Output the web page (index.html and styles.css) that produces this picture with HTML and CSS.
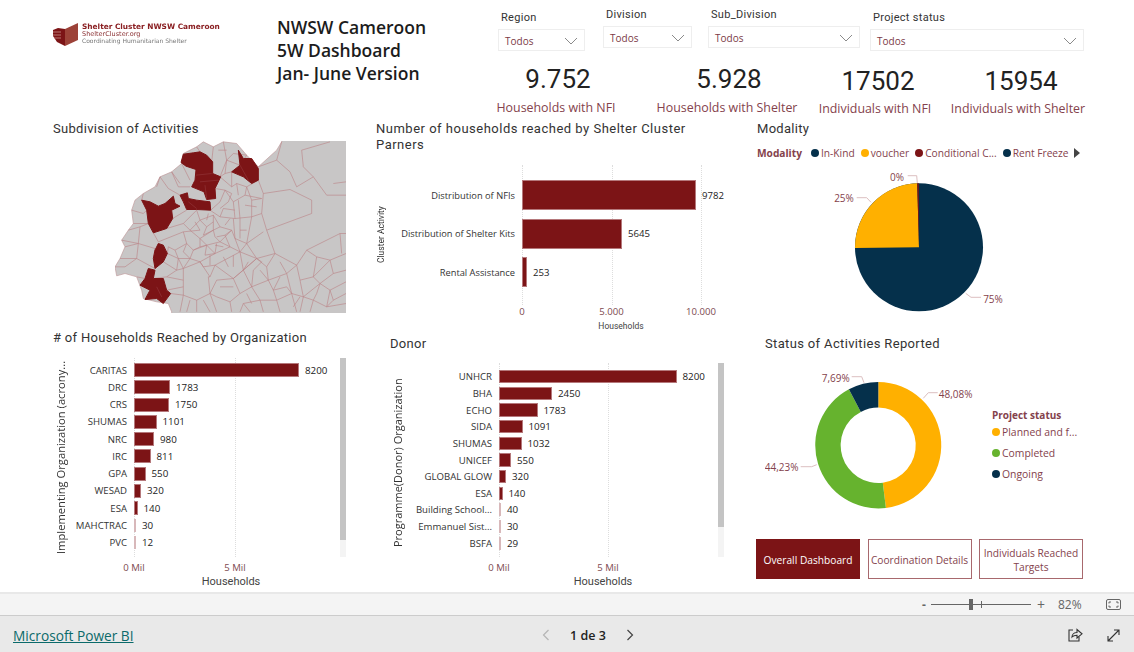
FILE: index.html
```html
<!DOCTYPE html>
<html lang="en">
<head>
  <meta charset="UTF-8">
  <title>NWSW Cameroon 5W Dashboard</title>
  <link rel="stylesheet" href="styles.css">
</head>
<body>
  <div class="report">
    <!-- header -->
    <div class="header">
      <div class="logo">
        <svg class="logo-mark" width="25" height="23" viewBox="0 0 25 23">
          <polygon points="12,6 25,0 25,17 12,23" fill="#9c4238"/>
          <polygon points="12,6 12,23 4,19 0,13 0,7 5,5" fill="#7c1416"/>
          <path d="M0 9 L8 9 M0 12 L8 12 M1 15 L8 15" stroke="#c98f8c" stroke-width="0.8"/>
        </svg>
        <div class="logo-text">
          <div class="logo-name">Shelter Cluster NWSW Cameroon</div>
          <div class="logo-site">ShelterCluster.org</div>
          <div class="logo-tag">Coordinating Humanitarian Shelter</div>
        </div>
      </div>
      <h1 class="report-title">NWSW Cameroon<br>5W Dashboard<br>Jan- June Version</h1>
      <div class="header-right">
        <div class="filters">
          <div class="filter filter-region low">
            <div class="filter-label">Region</div>
            <div class="filter-box">Todos<svg class="chev" width="14" height="8" viewBox="0 0 14 8"><path d="M1 1 L7 7 L13 1" fill="none" stroke="#8a8a8a"/></svg></div>
          </div>
          <div class="filter filter-division">
            <div class="filter-label">Division</div>
            <div class="filter-box">Todos<svg class="chev" width="14" height="8" viewBox="0 0 14 8"><path d="M1 1 L7 7 L13 1" fill="none" stroke="#8a8a8a"/></svg></div>
          </div>
          <div class="filter filter-sub">
            <div class="filter-label">Sub_Division</div>
            <div class="filter-box">Todos<svg class="chev" width="14" height="8" viewBox="0 0 14 8"><path d="M1 1 L7 7 L13 1" fill="none" stroke="#8a8a8a"/></svg></div>
          </div>
          <div class="filter filter-status low">
            <div class="filter-label">Project status</div>
            <div class="filter-box">Todos<svg class="chev" width="14" height="8" viewBox="0 0 14 8"><path d="M1 1 L7 7 L13 1" fill="none" stroke="#8a8a8a"/></svg></div>
          </div>
        </div>
        <div class="kpis">
          <div class="kpi kpi-1"><div class="kpi-value">9.752</div><div class="kpi-label">Households with NFI</div></div>
          <div class="kpi kpi-2"><div class="kpi-value">5.928</div><div class="kpi-label">Households with Shelter</div></div>
          <div class="kpi kpi-3 low"><div class="kpi-value">17502</div><div class="kpi-label">Individuals with NFI</div></div>
          <div class="kpi kpi-4 low"><div class="kpi-value">15954</div><div class="kpi-label">Individuals with Shelter</div></div>
        </div>
      </div>
    </div>

    <!-- middle row -->
    <div class="row-mid">
      <div class="panel panel-map">
        <h2 class="visual-title">Subdivision of Activities</h2>
        <svg class="map" width="231" height="172" viewBox="45 33 693 515">
          <path class="land" d="M215 570 L215 545 L205 520 L170 515 L130 505 L125 480 L110 440 L75 430 L50 437 L45 410 L60 385 L75 350 L65 330 L85 300 L100 280 L95 240 L105 210 L130 190 L165 170 L180 140 L215 125 L245 100 L250 70 L290 50 L310 35 L340 50 L370 35 L410 40 L440 75 L475 110 L530 60 L545 35 L545 20 L760 20 L760 570 Z"/>
          <g class="mesh">
            <path d="M490 190 L570 178 L635 210 L635 250 L500 300 L485 250 Z"/>
            <path d="M500 300 L525 370 L590 405 L620 360 L720 310 L738 310"/>
            <path d="M475 110 L530 90 L570 125 L590 170 L640 140 L680 195 L738 195"/>
            <path d="M545 35 L530 90 M640 140 L610 110 L605 60 L690 35 M738 155 L700 160"/>
            <path d="M590 405 L600 450 L640 440 L690 390 L738 370 M720 310 L725 370"/>
            <path d="M440 75 L410 120 M370 35 L380 90 L360 140 M340 50 L335 95 M290 50 L300 65"/>
            <path d="M380 90 L420 105 M375 130 L395 125 M360 140 L395 170 L410 160 L440 170 L475 150 M475 150 L490 190"/>
            <path d="M245 100 L270 150 M180 140 L205 175 L240 195 M215 125 L235 170 L270 170"/>
            <path d="M130 190 L125 210 M100 280 L145 280 M120 290 L115 340 L165 355 M160 308 L175 335"/>
            <path d="M218 265 L260 240 M200 295 L250 280 L290 240 M175 335 L250 305 L300 300"/>
            <path d="M345 175 L375 180 L400 215 L435 195 L485 205 M375 180 L360 215 L332 240 M400 215 L405 265 L360 260 L330 240"/>
            <path d="M405 265 L455 260 L485 250 M455 260 L440 340 L405 325 L400 265 M440 340 L490 305 M440 340 L470 385 L525 370"/>
            <path d="M290 240 L300 270 L340 255 L360 290 L395 300 L405 325 M300 270 L270 300 L300 325 L340 300 L360 290 M340 255 L340 300"/>
            <path d="M300 325 L320 345 L360 335 L395 300 M320 345 L345 370 L390 350 L420 365 L470 385 M360 335 L390 350"/>
            <path d="M250 305 L260 340 L225 360 L205 350 L202 370 M260 340 L280 360 L320 345 M280 360 L270 385 L300 395 L345 370"/>
            <path d="M202 370 L235 385 L230 420 L190 395 M235 385 L270 385 M230 420 L250 415 L300 395 L330 440 L345 405 L420 365"/>
            <path d="M160 445 L200 440 L230 420 M200 440 L250 450 L250 415 M250 450 L250 495 L212 490 M250 495 L290 510 L330 490 L325 440 L330 440"/>
            <path d="M345 405 L400 445 L470 385 M400 445 L350 450 L330 490 L350 545 M400 445 L420 490 L390 515 L350 500 M420 490 L455 470 L430 420 L400 445"/>
            <path d="M470 385 L500 410 L525 370 M500 410 L505 450 L455 470 L480 510 L430 520 L420 545 M505 450 L560 430 L590 405 M560 430 L575 490 L530 510 L480 510 M530 510 L540 545"/>
            <path d="M600 450 L610 500 L575 490 M610 500 L660 460 L690 480 L738 455 M640 440 L660 460 M690 480 L680 530 L640 510 L610 500 M640 510 L630 545 M680 530 L738 520"/>
            <path d="M250 495 L240 545 M290 510 L290 545 M390 515 L395 545 M200 480 L250 470 M330 490 L350 500"/>
            <path d="M75 350 L115 340 M60 385 L110 385 L165 415 M110 385 L115 340 M110 440 L135 445 M165 355 L160 385"/>
            <path d="M300 270 L320 290 L340 275 M320 290 L310 315 L340 300 M270 300 L250 280"/>
            <path d="M360 260 L370 235 L405 240 M375 180 L395 190 L385 215 M410 160 L415 195 M435 195 L440 170 M440 170 L455 210 L485 205 M455 210 L455 260"/>
            <path d="M345 370 L350 340 M320 345 L315 375 L345 370 M260 340 L250 365 L270 385 M280 360 L300 350 L320 345 M225 360 L235 385"/>
            <path d="M340 300 L345 320 L360 335 M395 300 L375 315 L350 320 M375 315 L390 350 M405 325 L420 365 M440 340 L420 365"/>
            <path d="M300 395 L310 410 L345 405 M250 415 L260 400 L270 385 M235 385 L250 415"/>
            <path d="M420 365 L430 420 M470 385 L430 420 M470 385 L485 395 L460 420 L455 470"/>
            <path d="M145 280 L120 290 M215 125 L240 160 M180 140 L170 170"/>
            <path d="M505 450 L520 480 L560 470 L575 490 M520 480 L530 510 M480 510 L490 545 M430 520 L450 545 M575 490 L590 545 M610 500 L600 545 M660 460 L650 490 L640 510 M690 480 L700 510 L738 490 M700 510 L680 530 M690 390 L700 430 L738 420 M700 430 L660 460"/>
            <path d="M620 360 L650 380 L690 390 M650 380 L640 440"/>
            <path d="M380 90 L375 130 M420 105 L410 120 M395 170 L395 125 M375 130 L360 140 M380 90 L400 70 L440 75 M355 60 L380 60"/>
            <path d="M95 240 L130 250 L140 240 M85 300 L120 290 M65 330 L115 340 M45 410 L75 410 L110 385"/>
            <path d="M285 275 L300 300 M320 270 L325 250 M345 345 L370 350 M300 350 L300 325 M375 285 L390 265 M420 300 L440 300 M420 265 L420 325"/>
            <path d="M415 210 L420 265 M435 225 L470 230 M385 215 L360 235 M330 375 L330 405 M370 380 L385 410 M400 375 L400 410 M445 395 L430 420"/>
            <path d="M480 420 L505 450 M540 440 L520 480 M540 395 L560 430 M360 470 L400 470 M440 490 L455 520 M310 510 L330 545 M270 510 L260 545 M600 500 L580 530"/>
          </g>
          <g class="hit">
            <path d="M243 97 L250 72 L280 68 L300 65 L320 75 L338 95 L338 130 L362 140 L350 165 L345 175 L347 205 L320 208 L312 185 L275 170 L285 150 L288 118 L258 108 Z"/>
            <path d="M415 60 L430 85 L455 85 L475 115 L475 150 L455 160 L430 140 L395 125 L420 105 Z"/>
            <path d="M125 210 L150 215 L175 228 L195 220 L220 198 L225 220 L240 228 L215 240 L218 265 L200 295 L160 308 L145 280 L140 240 Z"/>
            <path d="M240 195 L262 188 L265 205 L290 210 L330 215 L332 240 L290 238 L260 238 L250 215 Z"/>
            <path d="M175 340 L190 345 L202 370 L190 395 L165 415 L160 385 L165 360 Z"/>
            <path d="M145 415 L165 420 L160 445 L190 445 L200 480 L212 490 L190 520 L170 505 L135 508 L150 480 L120 465 L135 445 Z"/>
          </g>
          <path class="hit-lines" d="M288 135 L335 130 M300 155 L355 150 M315 165 L320 205 M420 105 L445 150 M265 215 L290 235 M170 470 L185 500"/>
        </svg>
      </div>

      <div class="panel panel-activity">
        <h2 class="visual-title">Number of households reached by Shelter Cluster Parners</h2>
        <div class="bar-chart activity-chart">
          <div class="y-title">Cluster Activity</div>
          <div class="chart-body">
            <div class="plot">
              <span class="gridline g0"></span><span class="gridline g1"></span><span class="gridline g2"></span>
              <div class="bar-row"><div class="bar-label">Distribution of NFIs</div><div class="bar" style="width:174px"></div><div class="bar-value">9782</div></div>
              <div class="bar-row"><div class="bar-label">Distribution of Shelter Kits</div><div class="bar" style="width:100px"></div><div class="bar-value">5645</div></div>
              <div class="bar-row"><div class="bar-label">Rental Assistance</div><div class="bar" style="width:5px"></div><div class="bar-value">253</div></div>
            </div>
            <div class="ticks"><span>0</span><span>5.000</span><span>10.000</span></div>
            <div class="x-title">Households</div>
          </div>
        </div>
      </div>

      <div class="panel panel-modality">
        <h2 class="visual-title">Modality</h2>
        <div class="legend">
          <b>Modality</b>
          <span class="leg"><i class="dot navy"></i>In-Kind</span>
          <span class="leg"><i class="dot amber"></i>voucher</span>
          <span class="leg"><i class="dot wine"></i>Conditional C...</span>
          <span class="leg"><i class="dot navy"></i>Rent Freeze</span>
          <svg class="leg-arrow" width="6" height="10" viewBox="0 0 6 10"><path d="M0 0 L6 5 L0 10 Z" fill="#444"/></svg>
        </div>
        <svg class="pie" width="280" height="155" viewBox="810 165 280 155">
          <circle cx="919" cy="247.3" r="64" fill="#05304b"/>
          <path d="M919 247.3 L855 248 A64 64 0 0 1 917.2 183.3 Z" fill="#ffb000"/>
          <path d="M919 247.3 L917.2 183.3 L918.8 183.3 Z" fill="#7c1416"/>
          <g class="leader">
            <polyline points="907.7,175.7 916.7,175.7 917.3,183"/>
            <polyline points="856.7,197.7 866.7,197.7 871,202.3"/>
            <polyline points="965.7,293.3 971,297.3 981,297.3"/>
          </g>
          <text class="pct" x="897" y="180.5" text-anchor="middle">0%</text>
          <text class="pct" x="844" y="201.5" text-anchor="middle">25%</text>
          <text class="pct" x="993" y="302.5" text-anchor="middle">75%</text>
        </svg>
      </div>
    </div>

    <!-- bottom row -->
    <div class="row-low">
      <div class="panel panel-org">
        <h2 class="visual-title"># of Households Reached by Organization</h2>
        <div class="bar-chart org-chart">
          <div class="y-title">Implementing Organization (acrony...</div>
          <div class="chart-body">
            <div class="plot">
              <span class="gridline g0"></span><span class="gridline g1"></span>
              <div class="bar-row"><div class="bar-label">CARITAS</div><div class="bar" style="width:165px"></div><div class="bar-value">8200</div></div>
              <div class="bar-row"><div class="bar-label">DRC</div><div class="bar" style="width:36px"></div><div class="bar-value">1783</div></div>
              <div class="bar-row"><div class="bar-label">CRS</div><div class="bar" style="width:35px"></div><div class="bar-value">1750</div></div>
              <div class="bar-row"><div class="bar-label">SHUMAS</div><div class="bar" style="width:22.5px"></div><div class="bar-value">1101</div></div>
              <div class="bar-row"><div class="bar-label">NRC</div><div class="bar" style="width:20px"></div><div class="bar-value">980</div></div>
              <div class="bar-row"><div class="bar-label">IRC</div><div class="bar" style="width:16.5px"></div><div class="bar-value">811</div></div>
              <div class="bar-row"><div class="bar-label">GPA</div><div class="bar" style="width:11.5px"></div><div class="bar-value">550</div></div>
              <div class="bar-row"><div class="bar-label">WESAD</div><div class="bar" style="width:7px"></div><div class="bar-value">320</div></div>
              <div class="bar-row"><div class="bar-label">ESA</div><div class="bar" style="width:3.5px"></div><div class="bar-value">140</div></div>
              <div class="bar-row"><div class="bar-label">MAHCTRAC</div><div class="bar thin" style="width:2px"></div><div class="bar-value">30</div></div>
              <div class="bar-row"><div class="bar-label">PVC</div><div class="bar thin" style="width:2px"></div><div class="bar-value">12</div></div>
            </div>
            <div class="ticks"><span>0 Mil</span><span>5 Mil</span></div>
            <div class="x-title">Households</div>
          </div>
          <div class="scroll"><div class="scroll-thumb"></div></div>
        </div>
      </div>

      <div class="panel panel-donor">
        <h2 class="visual-title">Donor</h2>
        <div class="bar-chart donor-chart">
          <div class="y-title">Programme(Donor) Organization</div>
          <div class="chart-body">
            <div class="plot">
              <span class="gridline g0"></span><span class="gridline g1"></span>
              <div class="bar-row"><div class="bar-label">UNHCR</div><div class="bar" style="width:177.5px"></div><div class="bar-value">8200</div></div>
              <div class="bar-row"><div class="bar-label">BHA</div><div class="bar" style="width:53px"></div><div class="bar-value">2450</div></div>
              <div class="bar-row"><div class="bar-label">ECHO</div><div class="bar" style="width:38.5px"></div><div class="bar-value">1783</div></div>
              <div class="bar-row"><div class="bar-label">SIDA</div><div class="bar" style="width:23.5px"></div><div class="bar-value">1091</div></div>
              <div class="bar-row"><div class="bar-label">SHUMAS</div><div class="bar" style="width:22.5px"></div><div class="bar-value">1032</div></div>
              <div class="bar-row"><div class="bar-label">UNICEF</div><div class="bar" style="width:12px"></div><div class="bar-value">550</div></div>
              <div class="bar-row"><div class="bar-label">GLOBAL GLOW</div><div class="bar" style="width:7px"></div><div class="bar-value">320</div></div>
              <div class="bar-row"><div class="bar-label">ESA</div><div class="bar" style="width:3.5px"></div><div class="bar-value">140</div></div>
              <div class="bar-row"><div class="bar-label">Building School...</div><div class="bar thin" style="width:2px"></div><div class="bar-value">40</div></div>
              <div class="bar-row"><div class="bar-label">Emmanuel Sist...</div><div class="bar thin" style="width:2px"></div><div class="bar-value">30</div></div>
              <div class="bar-row"><div class="bar-label">BSFA</div><div class="bar thin" style="width:2px"></div><div class="bar-value">29</div></div>
            </div>
            <div class="ticks"><span>0 Mil</span><span>5 Mil</span></div>
            <div class="x-title">Households</div>
          </div>
          <div class="scroll"><div class="scroll-thumb"></div></div>
        </div>
      </div>

      <div class="panel panel-status">
        <h2 class="visual-title">Status of Activities Reported</h2>
        <div class="status-body">
          <svg class="donut" width="227" height="165" viewBox="765 362 227 165">
            <path d="M878.3 382 A63.3 63.3 0 0 1 885.9 508.1 L882.8 482.7 A37.7 37.7 0 0 0 878.3 407.6 Z" fill="#ffb000"/>
            <path d="M885.9 508.1 A63.3 63.3 0 0 1 848.9 389.3 L860.8 411.9 A37.7 37.7 0 0 0 882.8 482.7 Z" fill="#66b32e"/>
            <path d="M848.9 389.3 A63.3 63.3 0 0 1 878.3 382 L878.3 407.6 A37.7 37.7 0 0 0 860.8 411.9 Z" fill="#05304b"/>
            <g class="leader">
              <polyline points="851.7,376.7 861.7,376.7 864,382.7"/>
              <polyline points="923.3,398.3 928.3,392.7 937.7,392.7"/>
              <polyline points="800.7,466.7 811.7,466.7 816.7,464.7"/>
            </g>
            <text class="pct" x="835.7" y="381.5" text-anchor="middle">7,69%</text>
            <text class="pct" x="955.7" y="398" text-anchor="middle">48,08%</text>
            <text class="pct" x="781.7" y="471" text-anchor="middle">44,23%</text>
          </svg>
          <div class="status-legend">
            <b>Project status</b>
            <span class="leg"><i class="dot amber"></i>Planned and f...</span>
            <span class="leg"><i class="dot green"></i>Completed</span>
            <span class="leg"><i class="dot navy"></i>Ongoing</span>
          </div>
        </div>
        <div class="nav-buttons">
          <div class="nav-btn active">Overall Dashboard</div>
          <div class="nav-btn">Coordination Details</div>
          <div class="nav-btn">Individuals Reached Targets</div>
        </div>
      </div>
    </div>
  </div>

  <!-- power bi chrome -->
  <div class="zoom-bar">
    <span class="zoom-minus">-</span>
    <div class="slider"><span class="slider-thumb"></span><span class="slider-mark"></span></div>
    <span class="zoom-plus">+</span>
    <span class="zoom-pct">82%</span>
    <svg class="fit" width="15" height="11" viewBox="0 0 15 11"><rect x="0.5" y="0.5" width="14" height="10" rx="1.5" fill="none" stroke="#666"/><path d="M3 4.5 V3 H5 M10 3 H12 V4.5 M12 6.5 V8 H10 M5 8 H3 V6.5" fill="none" stroke="#666"/></svg>
  </div>
  <div class="footer">
    <a class="pbi-link" href="#">Microsoft Power BI</a>
    <div class="pager">
      <svg width="8" height="12" viewBox="0 0 8 12"><path d="M6.5 1 L1.5 6 L6.5 11" fill="none" stroke="#b5b5b5" stroke-width="1.2"/></svg>
      <span>1 de 3</span>
      <svg width="8" height="12" viewBox="0 0 8 12"><path d="M1.5 1 L6.5 6 L1.5 11" fill="none" stroke="#444" stroke-width="1.2"/></svg>
    </div>
    <div class="footer-icons">
      <svg width="15" height="14" viewBox="0 0 15 14"><path d="M5 2 H1 V13 H11 V9" fill="none" stroke="#333" stroke-width="1.1"/><path d="M4 9 C4 6 6.5 4.5 9 4.5 V1.5 L14 5.8 L9 10 V7.2 C7 7.2 5.2 7.6 4 9 Z" fill="none" stroke="#333" stroke-width="1.1"/></svg>
      <svg width="13" height="13" viewBox="0 0 13 13"><path d="M1 12 L12 1 M7 1 H12 V6 M1 7 V12 H6" fill="none" stroke="#333" stroke-width="1.1"/></svg>
    </div>
  </div>
</body>
</html>
```

FILE: styles.css
```css
* {
  box-sizing: border-box;
}

body {
  margin: 0;
  width: 1134px;
  height: 652px;
  overflow: hidden;
  background: #fff;
  font-family: "Open Sans", "Noto Sans", sans-serif;
  color: #222;
}

.report {
  height: 592px;
}

/* header */
.header {
  display: flex;
  height: 118px;
}

.logo {
  display: flex;
  width: 224px;
  height: 50px;
  margin-left: 53px;
  padding-top: 23px;
  filter: blur(0.3px);
}

.logo-mark {
  flex: none;
  margin-right: 4px;
}

.logo-name {
  font: bold 7.4px/8px "DejaVu Sans", sans-serif;
  color: #8a1f22;
  white-space: nowrap;
}

.logo-site {
  font: 6.5px/7px "DejaVu Sans", sans-serif;
  color: #8a3033;
}

.logo-tag {
  font: 6px/6.5px "DejaVu Sans", sans-serif;
  color: #777;
  white-space: nowrap;
}

.report-title {
  width: 221px;
  margin: 16px 0 0;
  font-size: 17.5px;
  line-height: 23px;
  font-weight: 600;
  color: #1c1c1c;
  white-space: nowrap;
}

.header-right {
  flex: 1;
}

.filters {
  display: flex;
  height: 65px;
  padding-top: 7px;
}

.filter {
  flex: none;
}

.filter.low {
  padding-top: 3px;
}

.filter-region { width: 105px; }
.filter-division { width: 105px; }
.filter-sub { width: 162px; }
.filter-status { width: 214px; }

.filter-label {
  height: 15px;
  padding-left: 3px;
  font: 11px/15px "Roboto", sans-serif;
  letter-spacing: 0.3px;
  color: #333;
}

.filter-box {
  display: flex;
  align-items: center;
  justify-content: space-between;
  height: 22px;
  margin-top: 4px;
  padding: 1px 6px 0 6px;
  border: 1px solid #eee;
  font-size: 10px;
  color: #7b3a46;
}

.filter-region .filter-box { width: 87px; }
.filter-division .filter-box { width: 89px; }
.filter-sub .filter-box { width: 152px; }

.kpis {
  display: flex;
}

.kpi {
  flex: none;
  width: 120px;
  text-align: center;
  white-space: nowrap;
}

.kpi-2 { margin-left: 51px; }
.kpi-3 { margin-left: 29px; }
.kpi-4 { margin-left: 23px; }

.kpi-value {
  height: 28px;
  font: 26px/28px "Roboto", sans-serif;
  color: #222;
}

.kpi-label {
  display: flex;
  justify-content: center;
  margin-top: 7px;
  padding-right: 4px;
  font-size: 12.4px;
  line-height: 16px;
  color: #84424c;
}

.kpi.low {
  padding-top: 2px;
}

.kpi.low .kpi-label {
  margin-top: 6px;
  padding-right: 6px;
}

/* shared */
.visual-title {
  margin: 0;
  font: 400 13px/16px "Roboto", sans-serif;
  letter-spacing: 0.3px;
  color: #333;
}

.row-mid {
  display: flex;
  height: 210px;
}

.row-low {
  display: flex;
  height: 264px;
}

.panel {
  flex: none;
}

.panel-map {
  width: 370px;
  padding: 3px 0 0 53px;
}

.map {
  display: block;
  margin: 4px 0 0 62px;
}

.land {
  fill: #c8c6c6;
  stroke: #c09a9c;
  stroke-width: 2;
}

.mesh path {
  fill: none;
  stroke: #bb8185;
  stroke-width: 1.8;
}

.hit path {
  fill: #7c1416;
  stroke: #7c1416;
  stroke-width: 3;
}

.hit-lines {
  fill: none;
  stroke: #a04a4e;
  stroke-width: 1.2;
}

.panel-activity {
  width: 380px;
  padding: 3px 0 0 6px;
}

.panel-activity .visual-title {
  width: 330px;
  letter-spacing: 0.5px;
}

.panel-modality {
  width: 384px;
  padding: 3px 0 0 7px;
}

/* bar charts */
.bar-chart {
  display: flex;
  align-items: flex-start;
}

.y-title {
  flex: none;
  writing-mode: vertical-rl;
  transform: rotate(180deg);
  text-align: center;
  white-space: nowrap;
  color: #333;
}

.plot {
  position: relative;
}

.gridline {
  position: absolute;
  top: 0;
  bottom: 0;
  border-left: 1px dotted #ddd;
}

.bar-row {
  position: relative;
  display: flex;
  align-items: center;
}

.bar-label {
  flex: none;
  padding-right: 7px;
  text-align: right;
  white-space: nowrap;
  color: #333;
}

.bar {
  flex: none;
  background: #7c1416;
  border: 1px solid #b5787b;
}

.bar.thin {
  background: #d8b8ba;
  border: 0;
}

.bar-value {
  margin-left: 6px;
  color: #222;
}

.ticks {
  display: flex;
  color: #7c4a50;
}

.ticks span {
  flex: none;
  text-align: center;
}

.x-title {
  font-family: "Roboto", sans-serif;
  color: #444;
  text-align: center;
}

.scroll {
  flex: none;
  width: 6px;
  height: 199px;
  background: #f4f4f4;
}

.scroll-thumb {
  height: 182px;
  background: #c4c4c4;
}

/* activity chart */
.activity-chart {
  margin-top: 12px;
}

.activity-chart .y-title {
  width: 11px;
  height: 140px;
  font: 8.5px/11px "Roboto", sans-serif;
}

.activity-chart .plot {
  width: 345px;
  height: 140px;
  padding-top: 15px;
}

.activity-chart .bar-row {
  height: 30px;
  margin-bottom: 8.5px;
}

.activity-chart .bar-label {
  width: 135px;
  font-size: 9.3px;
}

.activity-chart .bar {
  height: 30px;
}

.activity-chart .bar-value {
  font-size: 9.6px;
}

.activity-chart .g0 { left: 135px; }
.activity-chart .g1 { left: 224.5px; }
.activity-chart .g2 { left: 313.5px; }

.activity-chart .ticks {
  height: 14px;
  padding-left: 115px;
  font-size: 9.6px;
  line-height: 14px;
}

.activity-chart .ticks span {
  width: 40px;
  margin-right: 49.5px;
}

.activity-chart .x-title {
  width: 228px;
  margin-left: 120px;
  font-size: 8.5px;
  line-height: 14px;
}

/* org chart */
.panel-org {
  width: 390px;
  padding: 2px 0 0 53px;
}

.org-chart {
  margin-top: 12px;
}

.org-chart .y-title {
  width: 15px;
  height: 199px;
  font: 11.2px/15px "Open Sans", sans-serif;
}

.org-chart .chart-body {
  width: 272px;
}

.org-chart .plot {
  height: 199px;
  padding-top: 3.4px;
}

.org-chart .bar-row {
  height: 17.27px;
}

.org-chart .bar-label {
  width: 66px;
  font-size: 9.6px;
}

.org-chart .bar {
  height: 14px;
}

.org-chart .bar.thin {
  height: 13px;
}

.org-chart .bar-value {
  font-size: 9.8px;
}

.org-chart .g0 { left: 66px; }
.org-chart .g1 { left: 167px; }

.org-chart .ticks {
  height: 18px;
  padding: 3px 0 0 46px;
  font-size: 9.6px;
  line-height: 16px;
}

.org-chart .ticks span {
  width: 40px;
  margin-right: 61px;
}

.org-chart .x-title {
  margin-left: 66px;
  width: 194px;
  font-size: 11px;
  line-height: 14px;
}

/* donor chart */
.panel-donor {
  width: 366px;
  padding: 8px 0 0 0;
}

.donor-chart {
  margin-top: 11px;
}

.donor-chart .y-title {
  width: 15px;
  height: 194px;
  padding-bottom: 6px;
  font: 11px/15px "Open Sans", sans-serif;
}

.donor-chart .chart-body {
  width: 313px;
}

.donor-chart .plot {
  height: 194px;
  padding-top: 5.4px;
}

.donor-chart .bar-row {
  height: 16.66px;
}

.donor-chart .bar-label {
  width: 94px;
  font-size: 9.6px;
}

.donor-chart .bar {
  height: 13.5px;
}

.donor-chart .bar.thin {
  height: 13px;
}

.donor-chart .bar-value {
  font-size: 9.8px;
}

.donor-chart .g0 { left: 94px; }
.donor-chart .g1 { left: 203px; }

.donor-chart .ticks {
  height: 18px;
  padding: 3px 0 0 74px;
  font-size: 9.6px;
  line-height: 16px;
}

.donor-chart .ticks span {
  width: 40px;
  margin-right: 69px;
}

.donor-chart .x-title {
  margin-left: 94px;
  width: 208px;
  font-size: 11px;
  line-height: 14px;
}

.donor-chart .scroll {
  height: 194px;
}

.donor-chart .scroll-thumb {
  height: 164px;
}

/* legends and pies */
.legend {
  display: flex;
  align-items: center;
  height: 14px;
  margin-top: 9px;
  font-size: 10.2px;
  color: #84424c;
  white-space: nowrap;
}

.legend b {
  width: 54px;
  font-weight: 700;
}

.leg {
  display: inline-flex;
  align-items: center;
  margin-right: 6px;
}

.dot {
  flex: none;
  width: 8px;
  height: 8px;
  margin-right: 2px;
  border-radius: 50%;
}

.navy { background: #05304b; }
.amber { background: #ffb000; }
.wine { background: #7c1416; }
.green { background: #66b32e; }

.leg-arrow {
  margin-left: -1px;
}

.pie {
  display: block;
  margin: 5px 0 0 53px;
}

.leader polyline {
  fill: none;
  stroke: #dcbfc0;
}

.pct {
  font-size: 10px;
  font-family: "Open Sans", sans-serif;
  fill: #84424c;
}

/* status */
.panel-status {
  width: 378px;
  padding: 8px 0 0 0;
}

.panel-status .visual-title {
  margin-left: 9px;
  letter-spacing: 0.35px;
}

.status-body {
  display: flex;
  height: 184px;
  margin-left: 9px;
  margin-top: 3px;
}

.donut {
  display: block;
  margin-top: 7px;
}

.status-legend {
  display: flex;
  flex-direction: column;
  align-items: flex-start;
  padding-top: 53px;
  font-size: 10.4px;
  color: #84424c;
  white-space: nowrap;
}

.status-legend b {
  height: 13px;
  line-height: 14px;
  font-size: 10px;
}

.status-legend .leg {
  height: 21px;
}

.nav-buttons {
  display: flex;
  gap: 7.5px;
}

.nav-btn {
  display: flex;
  align-items: center;
  justify-content: center;
  width: 104px;
  height: 40px;
  padding: 1px 2px 0;
  border: 1px solid #a8686d;
  font-size: 10.2px;
  line-height: 14px;
  text-align: center;
  color: #84424c;
}

.nav-btn.active {
  background: #7c1416;
  border-color: #7c1416;
  color: #fff;
}

/* power bi chrome */
.zoom-bar {
  display: flex;
  align-items: center;
  height: 24px;
  padding-left: 922px;
  background: #f4f4f4;
  border-top: 2px solid #e8e8e8;
  border-bottom: 1px solid #ccc;
  color: #666;
  font-size: 12px;
}

.zoom-minus {
  width: 9px;
  font-weight: 700;
}

.slider {
  position: relative;
  width: 100px;
  height: 1px;
  background: #666;
}

.slider-thumb {
  position: absolute;
  left: 38px;
  top: -5px;
  width: 4px;
  height: 11px;
  background: #666;
}

.slider-mark {
  position: absolute;
  left: 50px;
  top: -3px;
  width: 1px;
  height: 7px;
  background: #666;
}

.zoom-plus {
  width: 21px;
  margin-left: 6px;
  font-size: 14px;
}

.zoom-pct {
  width: 48px;
  font-size: 12px;
}

.footer {
  display: flex;
  align-items: center;
  height: 36px;
  padding: 2px 0 0 13px;
  background: #e9e9e9;
}

.pbi-link {
  width: 529px;
  font-size: 13.7px;
  color: #0b6a6a;
  text-decoration: underline;
}

.pager {
  display: flex;
  align-items: center;
  gap: 20px;
  font-size: 12.5px;
  font-weight: 600;
  color: #222;
}

.footer-icons {
  display: flex;
  align-items: center;
  gap: 24px;
  margin-left: auto;
  padding-right: 14px;
}
```
